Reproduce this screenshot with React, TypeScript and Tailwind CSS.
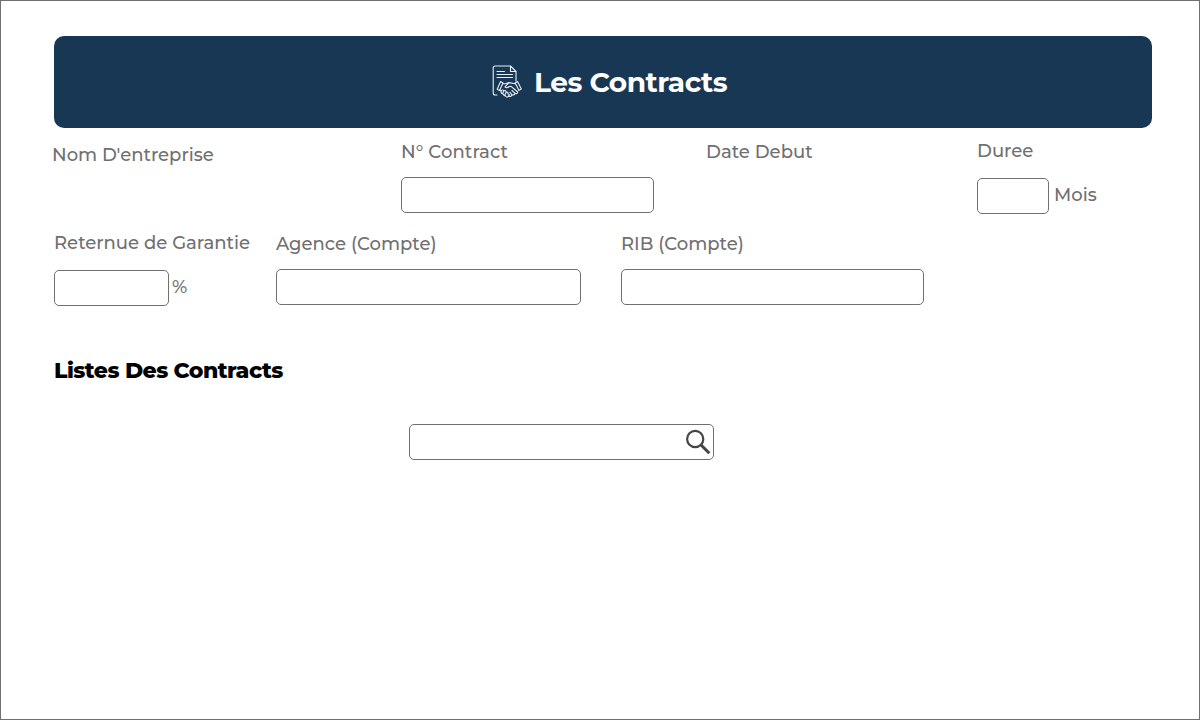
import type { ReactNode } from "react";

function ContractIcon() {
  return (
    <svg width="32" height="34" viewBox="0 0 32 34" fill="none" stroke="#e8eef3" strokeWidth="1.1" strokeLinecap="round" strokeLinejoin="round" aria-hidden="true">
      <path d="M5 30H3.2Q1.2 30 1.2 28V3Q1.2 1 3.2 1H18.5L24 6.5V16" />
      <path d="M18.5 1.2V6.5H23.8" />
      <path d="M5 6.5H12.5M5 9.5H20.5M5 12.5H20.5" />
      <path d="M8.6 16.5L5.2 24.2L7.5 25.4L11 18Z" />
      <path d="M25.5 16.5L29.3 24L27 25.4L23.2 18Z" />
      <path d="M11 18.8L14 18.6L17 17.6L23.2 18.8M17 17.6L13 21.8Q14.5 23.8 17.2 21.5L19 21.3L25.8 27Q25.3 29.3 23 28.3Q22.5 30.6 20 29.8Q19 32.4 16.4 31" />
      <path d="M7.8 25L9 26.5Q10.5 24 12 25.8Q14 25 14.3 27Q16.3 26.8 16 29Q18.5 29.5 16.4 31.3Q14.5 33 13.5 30.8Q11.5 31 11.4 29Q9 29 9 26.5M12 25.8L10.5 28.4M14.3 27L12.8 30M20 25.5L23 28.3M18 27.3L20 29.8" />
    </svg>
  );
}

function SearchIcon() {
  return (
    <svg width="26" height="26" viewBox="0 0 26 26" fill="none" stroke="#444" aria-hidden="true">
      <circle cx="10.2" cy="10" r="8.1" strokeWidth="2.2" />
      <path d="M15.8 15.8L24.3 24.3" strokeWidth="3" />
    </svg>
  );
}

function Label({ className = "", children }: { className?: string; children: ReactNode }) {
  return <span className={`block whitespace-nowrap text-[18.05px] font-medium leading-6 text-[#707070] ${className}`}>{children}</span>;
}

function Field({ label, className }: { label: string; className: string }) {
  return <input aria-label={label} className={`block h-9 shrink-0 rounded-[5px] border border-[#707070] bg-white px-2 outline-none ${className}`} />;
}

export default function App() {
  return (
    <main className="flex h-[720px] w-[1200px] flex-col overflow-hidden border border-[#707070] bg-white pl-[53px] pt-[35px] font-['Montserrat','Inter',sans-serif]">
      <header className="flex h-[92px] w-[1098px] shrink-0 items-center rounded-[10px] bg-[#183755] pl-[438px]">
        <ContractIcon />
        <h1 className="ml-[10px] whitespace-nowrap text-[28px] font-bold leading-8 tracking-[-0.45px] text-white">Les Contracts</h1>
      </header>

      <section className="grid h-[92px] shrink-0 grid-cols-[347px_305px_271px_1fr]">
        <div className="-ml-[2px] pt-[15px]">
          <Label>Nom D'entreprise</Label>
        </div>
        <div className="pt-[12px]">
          <Label className="mb-[13px] tracking-[0.1px]">N° Contract</Label>
          <Field label="N° Contract" className="w-[253px]" />
        </div>
        <div className="pt-[12px]">
          <Label>Date Debut</Label>
        </div>
        <div className="pt-[11px]">
          <Label className="mb-[15px]">Duree</Label>
          <div className="flex items-center gap-[5px]">
            <Field label="Duree" className="w-[72px]" />
            <Label className="-mt-[3px]">Mois</Label>
          </div>
        </div>
      </section>

      <section className="grid h-[130px] shrink-0 grid-cols-[222px_345px_1fr]">
        <div className="pt-[11px]">
          <Label className="mb-[15px]">Reternue de Garantie</Label>
          <div className="flex items-center gap-[3px]">
            <Field label="Reternue de Garantie" className="w-[115px]" />
            <Label className="-mt-[3px]">%</Label>
          </div>
        </div>
        <div className="pt-[12px]">
          <Label className="mb-[13px]">Agence (Compte)</Label>
          <Field label="Agence (Compte)" className="w-[305px]" />
        </div>
        <div className="pt-[12px]">
          <Label className="mb-[13px]">RIB (Compte)</Label>
          <Field label="RIB (Compte)" className="w-[303px]" />
        </div>
      </section>

      <h2 className="mt-[7px] shrink-0 whitespace-nowrap text-[22px] font-extrabold leading-7 tracking-[-0.5px] text-black">Listes Des Contracts</h2>

      <div className="ml-[355px] mt-[39px] flex h-9 w-[305px] shrink-0 items-center rounded-[5px] border border-[#707070] bg-white pr-[2px]">
        <input aria-label="Rechercher" className="h-full min-w-0 flex-1 bg-transparent px-2 outline-none" />
        <SearchIcon />
      </div>
    </main>
  );
}
